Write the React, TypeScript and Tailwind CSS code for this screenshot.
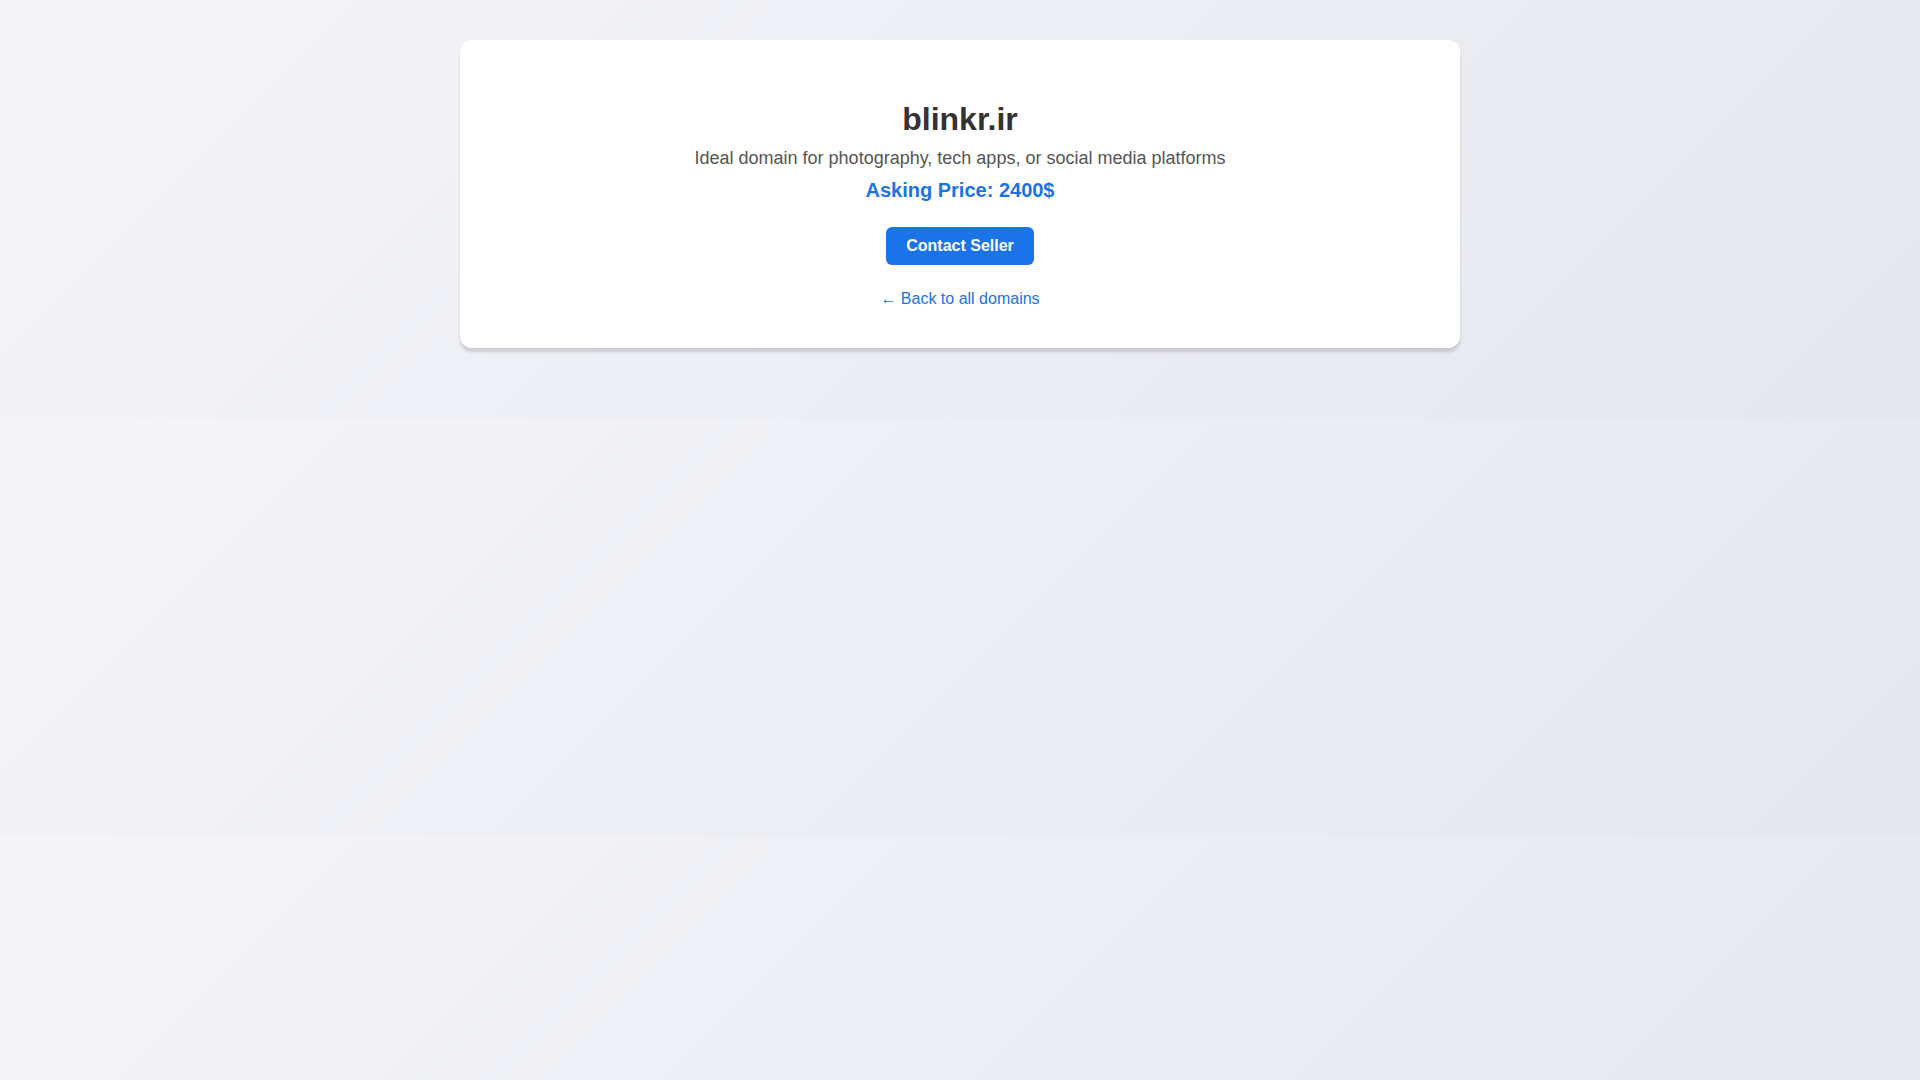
export default function App() {
  return (
    <div
      className="w-full h-[1080px] bg-[linear-gradient(135deg,#f5f5f9_0%,#e4e7ee_100%)] bg-[length:100%_418px] bg-repeat-y"
      style={{ fontFamily: '"Liberation Sans", Arial, sans-serif' }}
    >
      <div className="pt-[40px]">
        <div className="mx-auto w-[1000px] rounded-[12px] bg-white px-[40px] pt-[40px] pb-[40px] shadow-[0_4px_3px_rgba(0,0,0,0.14)] flex flex-col items-center text-center">
          <h1 className="mt-[21px] text-[32px] leading-[37px] font-bold text-[#333333]">blinkr.ir</h1>
          <p className="mt-[10px] text-[18px] leading-[21px] text-[#555555]">
            Ideal domain for photography, tech apps, or social media platforms
          </p>
          <p className="mt-[10px] text-[20px] leading-[23px] font-bold text-[#1a73e8]">Asking Price: 2400$</p>
          <button className="mt-[25px] h-[38px] px-[20px] rounded-[6px] bg-[#1a73e8] text-white text-[16px] font-bold leading-[18px]">
            Contact Seller
          </button>
          <a href="#" className="mt-[25px] text-[16px] leading-[18px] text-[#1a73e8]">
            ← Back to all domains
          </a>
        </div>
      </div>
    </div>
  );
}
